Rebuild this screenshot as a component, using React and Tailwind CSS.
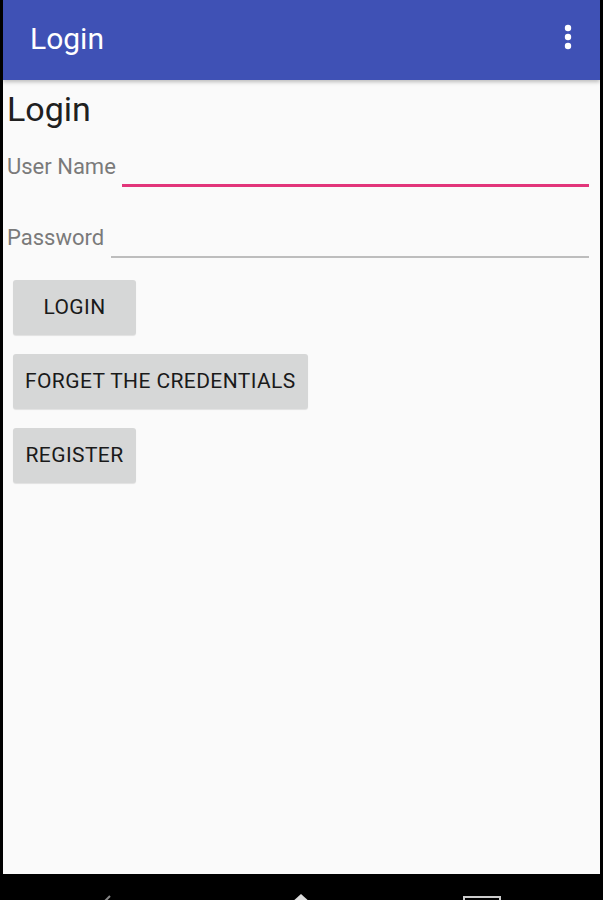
const buttons = ['LOGIN', 'FORGET THE CREDENTIALS', 'REGISTER'];

const App = () => {
  return (
    <div className="w-[603px] h-[900px] bg-black flex flex-col font-['Roboto',sans-serif] overflow-hidden">
      <div className="flex-1 flex flex-col ml-[3px] mr-[3px] bg-[#fafafa]">
        {/* App bar */}
        <div className="h-[80px] bg-[#3f51b5] flex items-center justify-between pl-[27px] pr-[28px] shadow-[0_2px_4px_rgba(0,0,0,0.25)]">
          <span className="text-white text-[30px] leading-none -mt-[2px]">Login</span>
          <svg className="w-[8px] h-[26px] -mt-[6px]" viewBox="0 0 8 26" fill="white">
            <circle cx="4" cy="4" r="3.2" />
            <circle cx="4" cy="13" r="3.2" />
            <circle cx="4" cy="22" r="3.2" />
          </svg>
        </div>

        <div className="pl-[4px] pr-[11px]">
          <h1 className="text-[34px] leading-none text-[#202020] mt-[12px]">Login</h1>

          {/* User name */}
          <div className="flex items-end mt-[30px]">
            <span className="text-[22px] leading-none text-[#7a7a7a] mb-[9px] mr-[6px]">User Name</span>
            <div className="flex-1 h-[3px] bg-[#e2357a]"></div>
          </div>

          {/* Password */}
          <div className="flex items-end mt-[40px]">
            <span className="text-[22px] leading-none text-[#7a7a7a] mb-[9px] mr-[7px]">Password</span>
            <div className="flex-1 h-[2px] bg-[#bdbdbd]"></div>
          </div>

          <div className="flex flex-col items-start gap-[19px] mt-[22px] pl-[6px]">
            {buttons.map((label) => (
              <button
                key={label}
                className="h-[55px] min-w-[123px] px-[12px] bg-[#d6d7d7] rounded-[3px] text-[21px] text-[#1a1a1a] tracking-[0.4px] shadow-[0_1px_1px_rgba(0,0,0,0.1)]"
              >
                {label}
              </button>
            ))}
          </div>
        </div>
      </div>

      {/* Navigation bar (cut off) */}
      <div className="h-[26px] relative">
        <svg className="absolute left-[100px] top-[20px]" width="20" height="10" viewBox="0 0 20 10">
          <path d="M10 2 L2 10" stroke="#888" strokeWidth="2" fill="none" />
        </svg>
        <svg className="absolute left-[289px] top-[19px]" width="24" height="10" viewBox="0 0 24 10">
          <path d="M12 1 L2 10 L22 10 Z" fill="#ddd" />
        </svg>
        <div className="absolute left-[463px] top-[22px] w-[38px] h-[6px] border-t-[2px] border-x-[2px] border-[#ccc]"></div>
      </div>
    </div>
  );
};

export default App;
